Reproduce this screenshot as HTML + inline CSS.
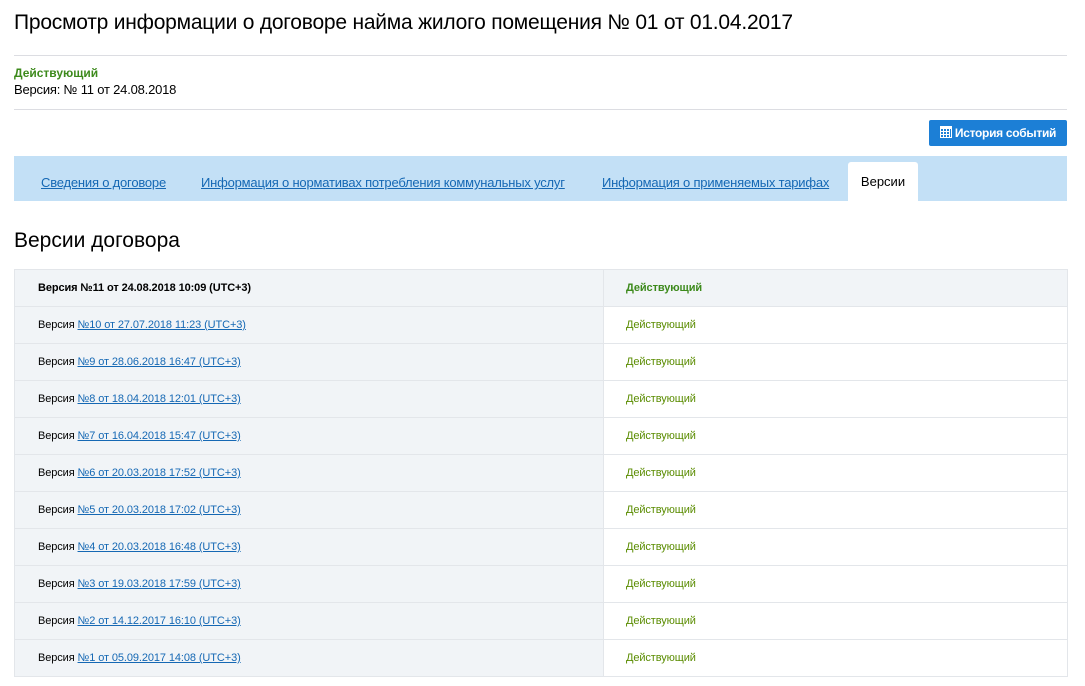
<!DOCTYPE html>
<html><head><meta charset="utf-8"><style>
body{margin:0;background:#fff;font-family:"Liberation Sans",Arial,sans-serif;color:#000;width:1085px;height:686px;overflow:hidden;position:relative}
.a{position:absolute}
h1{position:absolute;left:14px;top:11px;margin:0;font-weight:normal;font-size:21px;white-space:nowrap;letter-spacing:-0.22px}
.hr{position:absolute;left:14px;width:1053px;height:1px;background:#dcdde2}
.btn{left:929px;top:120px;width:138px;height:26px;background:#1c7fd6;border-radius:2px;color:#fff;font-size:12px;font-weight:bold;line-height:26px;text-align:center;letter-spacing:-0.3px}
.tabs{left:14px;top:156px;width:1053px;height:45px;background:#c3e0f6}
.tab{position:absolute;top:19px;font-size:13px;color:#1568b4;text-decoration:underline;white-space:nowrap;letter-spacing:-0.2px}
.act{left:834px;top:6px;width:70px;height:39px;background:#fff;border-radius:3px 3px 0 0;font-size:13px;color:#000;text-align:center;line-height:40px;position:absolute}
h2{position:absolute;left:14px;top:229px;margin:0;font-weight:normal;font-size:21px}
table{position:absolute;left:14px;top:269px;width:1054px;border-collapse:collapse;font-size:11px;letter-spacing:-0.1px}
td{height:36px;border:1px solid #e3e6ea;padding:0;}
td.l{width:565px;padding-left:23px;background:#f1f4f7}
td.r{padding-left:22px;color:#5a8c00}
tr.f td{background:#f1f4f7;font-weight:bold}
tr.f td.r{color:#3d8a1c}
a{color:#1568b4;text-decoration:underline}
</style></head><body>
<h1>Просмотр информации о договоре найма жилого помещения № 01 от 01.04.2017</h1>
<div class="hr" style="top:55px"></div>
<div class="a" style="left:14px;top:66px;font-size:12px;font-weight:bold;color:#3d8a1c">Действующий</div>
<div class="a" style="left:14px;top:82px;font-size:13px;letter-spacing:-0.2px">Версия: № 11 от 24.08.2018</div>
<div class="hr" style="top:109px"></div>
<div class="a btn"><svg width="12" height="12" viewBox="0 0 12 12" style="vertical-align:-1px;margin-right:3px"><rect x="0" y="0" width="12" height="12" fill="#fff"/><g fill="#1c7fd6"><rect x="1" y="3" width="2" height="2"/><rect x="4" y="3" width="2" height="2"/><rect x="7" y="3" width="2" height="2"/><rect x="1" y="6" width="2" height="2"/><rect x="4" y="6" width="2" height="2"/><rect x="7" y="6" width="2" height="2"/><rect x="1" y="9" width="2" height="2"/><rect x="4" y="9" width="2" height="2"/><rect x="7" y="9" width="2" height="2"/><rect x="10" y="3" width="1" height="8"/></g></svg>История событий</div>
<div class="a tabs">
<span class="tab" style="left:27px">Сведения о договоре</span>
<span class="tab" style="left:187px">Информация о нормативах потребления коммунальных услуг</span>
<span class="tab" style="left:588px">Информация о применяемых тарифах</span>
<div class="act">Версии</div>
</div>
<h2>Версии договора</h2>
<table>
<tr class="f"><td class="l">Версия №11 от 24.08.2018 10:09 (UTC+3)</td><td class="r">Действующий</td></tr>
<tr><td class="l">Версия <a>№10 от 27.07.2018 11:23 (UTC+3)</a></td><td class="r">Действующий</td></tr>
<tr><td class="l">Версия <a>№9 от 28.06.2018 16:47 (UTC+3)</a></td><td class="r">Действующий</td></tr>
<tr><td class="l">Версия <a>№8 от 18.04.2018 12:01 (UTC+3)</a></td><td class="r">Действующий</td></tr>
<tr><td class="l">Версия <a>№7 от 16.04.2018 15:47 (UTC+3)</a></td><td class="r">Действующий</td></tr>
<tr><td class="l">Версия <a>№6 от 20.03.2018 17:52 (UTC+3)</a></td><td class="r">Действующий</td></tr>
<tr><td class="l">Версия <a>№5 от 20.03.2018 17:02 (UTC+3)</a></td><td class="r">Действующий</td></tr>
<tr><td class="l">Версия <a>№4 от 20.03.2018 16:48 (UTC+3)</a></td><td class="r">Действующий</td></tr>
<tr><td class="l">Версия <a>№3 от 19.03.2018 17:59 (UTC+3)</a></td><td class="r">Действующий</td></tr>
<tr><td class="l">Версия <a>№2 от 14.12.2017 16:10 (UTC+3)</a></td><td class="r">Действующий</td></tr>
<tr><td class="l">Версия <a>№1 от 05.09.2017 14:08 (UTC+3)</a></td><td class="r">Действующий</td></tr>
</table>
</body></html>
